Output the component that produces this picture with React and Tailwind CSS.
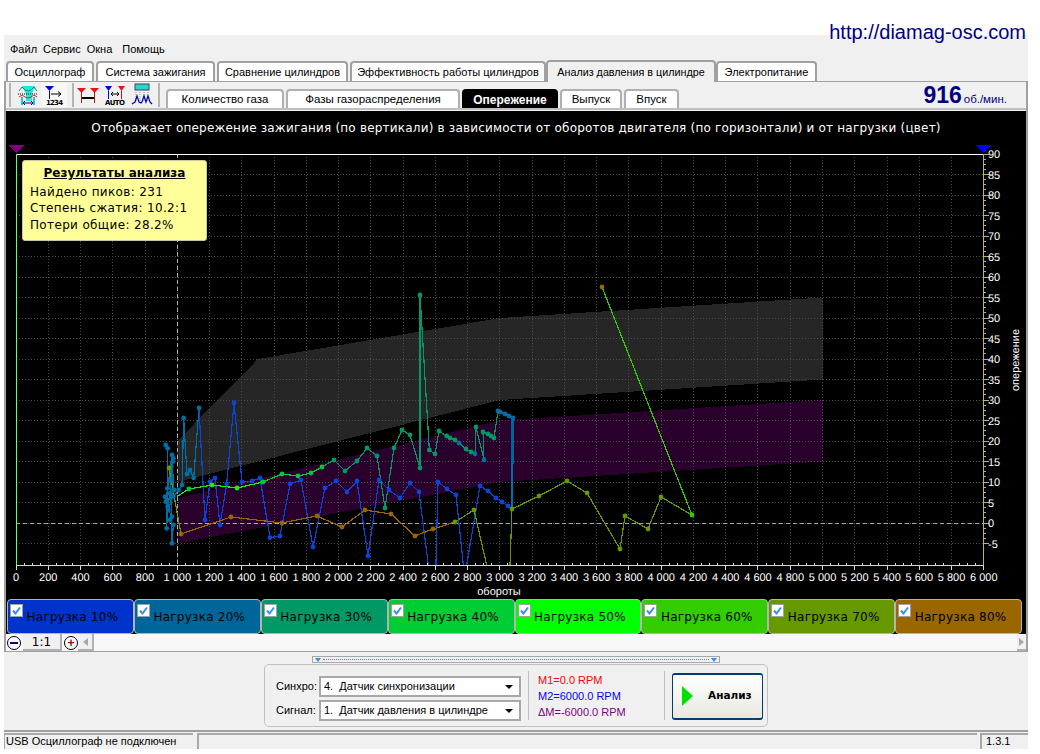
const topTabs = [
  { label: 'Осциллограф', w: 'w-[88px]' },
  { label: 'Система зажигания', w: 'w-[119px]' },
  { label: 'Сравнение цилиндров', w: 'w-[131px]' },
  { label: 'Эффективность работы цилиндров', w: 'w-[196px]' },
  { label: 'Анализ давления в цилиндре', w: 'w-[170px] h-[22px] -ml-[2px] bg-[#f0f0f0] border-b-0 -mb-[1px] z-10 text-[10.75px]', active: true },
  { label: 'Электропитание', w: 'w-[101px] -ml-[2px]' },
];

const subTabs = [
  { label: 'Количество газа', w: 'w-[118px]' },
  { label: 'Фазы газораспределения', w: 'w-[174px]' },
  { label: 'Опережение', w: 'w-[96px] bg-black text-white text-[12px] font-bold border-black', active: true },
  { label: 'Выпуск', w: 'w-[62px]' },
  { label: 'Впуск', w: 'w-[55px]' },
];

const loads = [
  { label: 'Нагрузка 10%', bg: 'bg-[#0033cc]' },
  { label: 'Нагрузка 20%', bg: 'bg-[#006699]' },
  { label: 'Нагрузка 30%', bg: 'bg-[#009966]' },
  { label: 'Нагрузка 40%', bg: 'bg-[#00cc33]' },
  { label: 'Нагрузка 50%', bg: 'bg-[#00ff00]' },
  { label: 'Нагрузка 60%', bg: 'bg-[#33cc00]' },
  { label: 'Нагрузка 70%', bg: 'bg-[#669900]' },
  { label: 'Нагрузка 80%', bg: 'bg-[#996600]' },
];

// x/y in page pixels
const rpmX = (r) => 16 + r * 0.1613;
const degY = (d) => 523 - d * 4.1;

// points read from the reference crops
const left = (pts) => pts.map(([x, y]) => [150 + x / 3, 280 + y / 3]);
const right = (pts) => pts.map(([x, y]) => [480 + x / 3, 280 + y / 3]);

const series = [
  {
    color: '#006fa6',
    pts: left([[47, 495], [53, 505], [50, 745], [53, 680], [60, 640], [45, 650], [48, 665], [66, 525], [70, 535], [62, 600], [66, 790], [70, 735], [60, 720], [66, 710], [55, 690], [72, 630], [52, 625], [64, 560], [68, 545], [70, 650], [86, 630], [96, 615], [101, 414], [111, 582], [120, 570], [131, 594], [147, 384]]),
  },
  {
    color: '#0a44d8',
    pts: left([[147, 384], [165, 720], [180, 605], [195, 594], [210, 735], [230, 612], [252, 369], [276, 606], [306, 603], [330, 594], [360, 773], [390, 768], [420, 612], [453, 600], [489, 801], [525, 624], [558, 603], [591, 636], [621, 603], [654, 828], [687, 600], [717, 630], [750, 654], [780, 609], [807, 636], [835, 855]]),
  },
  { color: '#0a44d8', pts: left([[858, 855], [864, 606], [891, 627], [918, 645], [940, 855]]) },
  { color: '#0a44d8', pts: left([[950, 855], [990, 618], [1014, 633], [1038, 654], [1056, 666], [1074, 678], [1086, 687]]) },
  {
    color: '#009966',
    pts: left([[516, 561], [552, 540], [585, 573], [621, 543], [651, 504], [681, 528], [705, 684], [732, 504], [756, 450], [780, 465], [810, 564], [810, 45], [838, 510], [855, 522], [867, 453], [890, 468], [900, 474], [915, 480], [927, 489], [948, 507], [963, 516], [975, 522], [978, 441], [1002, 540], [999, 456], [1014, 462], [1023, 468], [1032, 474], [1044, 393]]),
  },
  { color: '#006699', pts: left([[1044, 393], [1050, 396], [1065, 402], [1077, 408], [1089, 414], [1089, 550], [1086, 550], [1086, 414]]) },
  { color: '#006fa6', pts: left([[1086, 550], [1086, 687]]) },
  { color: '#00cc33', pts: left([[339, 606], [396, 582], [444, 588], [483, 579], [516, 561]]) },
  { color: '#00ff00', pts: left([[80, 650], [117, 627], [186, 615], [261, 624], [339, 606]]) },
  { color: '#996600', pts: left([[93, 762], [243, 711], [396, 729], [501, 708], [576, 741], [645, 690], [723, 702], [795, 768], [849, 747], [915, 726]]) },
  { color: '#669900', pts: left([[57, 564], [93, 762]]) },
  { color: '#669900', pts: left([[915, 726], [972, 690], [1010, 855]]) },
  { color: '#669900', pts: right([[90, 855], [96, 687], [177, 648], [261, 603], [321, 639], [420, 807], [435, 708], [504, 747], [543, 651], [636, 705]]) },
  { color: '#33cc00', pts: right([[636, 705], [366, 21]]) },
];

const dots = [
  { color: '#006fa6', pts: left([[47, 495], [53, 505], [50, 745], [53, 680], [60, 640], [45, 650], [48, 665], [66, 525], [70, 535], [62, 600], [66, 790], [70, 735], [60, 720], [66, 710], [55, 690], [72, 630], [52, 625], [64, 560], [68, 545], [70, 650], [86, 630], [96, 615], [101, 414], [111, 582], [120, 570], [131, 594], [147, 384], [1002, 540], [1044, 393], [1050, 396], [1065, 402], [1077, 408], [1089, 414], [927, 489], [975, 522]]) },
  { color: '#0a44d8', pts: left([[165, 720], [180, 605], [195, 594], [210, 735], [230, 612], [252, 369], [276, 606], [306, 603], [330, 594], [360, 773], [390, 768], [420, 612], [453, 600], [489, 801], [525, 624], [558, 603], [591, 636], [621, 603], [654, 828], [687, 600], [717, 630], [750, 654], [780, 609], [807, 636], [864, 606], [891, 627], [918, 645], [990, 618], [1014, 633], [1038, 654], [1056, 666], [1074, 678]]) },
  { color: '#009966', pts: left([[552, 540], [585, 573], [621, 543], [651, 504], [681, 528], [705, 684], [732, 504], [756, 450], [780, 465], [810, 564], [810, 45], [838, 510], [855, 522], [867, 453], [890, 468], [900, 474], [915, 480], [948, 507], [963, 516], [978, 441], [999, 456], [1014, 462], [1023, 468], [1032, 474]]) },
  { color: '#00cc33', pts: left([[339, 606], [396, 582], [444, 588], [483, 579], [516, 561], [117, 627]]) },
  { color: '#00ff00', pts: left([[186, 615], [261, 624]]) },
  { color: '#996600', pts: left([[93, 762], [243, 711], [396, 729], [501, 708], [576, 741], [645, 690], [723, 702], [795, 768], [849, 747]]) },
  { color: '#996600', pts: right([[366, 21]]) },
  { color: '#669900', pts: left([[57, 564], [915, 726], [972, 690]]) },
  { color: '#669900', pts: right([[96, 687], [177, 648], [261, 603], [321, 639], [420, 807], [435, 708], [504, 747], [543, 651]]) },
  { color: '#33cc00', pts: right([[636, 705]]) },
];

const toStr = (pts) => pts.map(([x, y]) => `${x},${y}`).join(' ');
const bandGray = [[1000, 20], [1500, 40], [3000, 50], [5000, 55], [5000, 35], [3000, 30], [1000, 10]];
const bandPurple = [[1000, 6], [3000, 25], [5000, 30], [5000, 15], [3000, 10], [1000, -5]];
const band = (b) => toStr(b.map(([r, d]) => [rpmX(r), degY(d)]));

const rpmMajor = Array.from({ length: 31 }, (_, i) => i * 200);
const rpmMinor = Array.from({ length: 121 }, (_, i) => i * 50);
const degMajor = Array.from({ length: 20 }, (_, i) => 90 - i * 5);
const degMinor = Array.from({ length: 77 }, (_, i) => 90 - i * 1.25);
const fmtRpm = (r) => (r >= 1000 ? `${Math.floor(r / 1000)} ${String(r % 1000).padStart(3, '0')}` : String(r));

function Chart() {
  return (
    <svg width="1020" height="458" viewBox="6 141 1020 458" className="block" shapeRendering="crispEdges">
      <polygon points={band(bandGray)} fill="#262626" />
      <polygon points={band(bandPurple)} fill="#2a002c" />

      {rpmMajor.map((r) => (
        <line key={r} x1={rpmX(r)} x2={rpmX(r)} y1="154" y2="565" stroke="#4c4c4c" strokeDasharray="1 2" />
      ))}
      {degMajor.map((d) => (
        <line key={d} x1="16" x2="983" y1={degY(d)} y2={degY(d)} stroke="#4c4c4c" strokeDasharray="1 2" />
      ))}

      <line x1="177" x2="177" y1="154" y2="565" stroke="#b0b0b0" strokeDasharray="4 3" />
      <line x1="16" x2="983" y1="523" y2="523" stroke="#a8a8a8" strokeDasharray="4 3" />

      <line x1="16" x2="983" y1="154.5" y2="154.5" stroke="#ffffff" />
      <line x1="16.5" x2="16.5" y1="154" y2="565" stroke="#66ff66" />
      <line x1="983.5" x2="983.5" y1="154" y2="565" stroke="#b8b860" />

      {series.map((s, i) => (
        <polyline key={i} points={toStr(s.pts)} fill="none" stroke={s.color} strokeWidth="1.2" />
      ))}
      <g shapeRendering="auto">
        {dots.map((s) =>
          s.pts.map(([x, y], i) => <circle key={s.color + x + i} cx={x} cy={y} r="2.4" fill={s.color} />)
        )}
      </g>
      <rect x="6" y="566" width="1020" height="33" fill="#000000" />

      <line x1="16" x2="983" y1="565.5" y2="565.5" stroke="#d8d8d8" />
      {rpmMinor.map((r) => (
        <line key={r} x1={rpmX(r)} x2={rpmX(r)} y1={r % 200 === 0 ? 565 : 563} y2={r % 200 === 0 ? 570 : 565} stroke="#d8d8d8" />
      ))}
      {degMinor.map((d) => (
        <line key={d} x1="984" x2={d % 5 === 0 ? 989 : 986} y1={degY(d)} y2={degY(d)} stroke="#b8b860" />
      ))}

      <polygon points="8,145 24,145 16,153" fill="#800080" />
      <polygon points="975,145 991,145 983,153" fill="#0000ff" />

      <g fill="#ffffff" fontSize="11" fontFamily="'Liberation Sans', sans-serif" textRendering="geometricPrecision">
        {rpmMajor.map((r) => (
          <text key={r} x={rpmX(r)} y="581" textAnchor="middle">{fmtRpm(r)}</text>
        ))}
        {degMajor.map((d) => (
          <text key={d} x="988" y={degY(d) + 4}>{d}</text>
        ))}
        <text x="499" y="595" textAnchor="middle" fontSize="11">обороты</text>
        <text x="0" y="0" transform="translate(1019 360) rotate(-90)" textAnchor="middle" fontSize="11">опережение</text>
      </g>
    </svg>
  );
}

function IconWaves() {
  return (
    <svg width="22" height="24" viewBox="0 0 22 24">
      <path d="M5 3h13l-3 8v7H9v-7z" fill="#22e6e6" />
      <path d="M2 8 5 4l3 3 3 1 3-1 3-3 3 4" fill="none" stroke="#00a040" />
      <path d="M1 11h20" stroke="#000" strokeDasharray="1 1" />
      <path d="M2 14l3-2 3 2 3 1 3-1 3-2 3 2" fill="none" stroke="#e02020" />
      <path d="M5 14v8M17 14v8" stroke="#22c0e6" strokeWidth="2" />
      <path d="M6 20h10M6 20l2-2M6 20l2 2M16 20l-2-2M16 20l-2 2" fill="none" stroke="#000080" />
    </svg>
  );
}

function IconNumbers() {
  return (
    <svg width="24" height="24" viewBox="0 0 24 24">
      <path d="M3 3h9L7.500 8z" fill="#0000e0" />
      <path d="M7.500 8v8" stroke="#0000e0" />
      <path d="M9 11h10M19 11l-3-2.500M19 11l-3 2.500" stroke="#000" fill="none" />
      <text x="4" y="22" fontSize="7" fontWeight="700" fontFamily="'DejaVu Sans', sans-serif" fill="#000" textLength="17">1234</text>
    </svg>
  );
}

function IconMarkers() {
  return (
    <svg width="24" height="24" viewBox="0 0 24 24">
      <path d="M1 5h9l-4.500 5zM14 5h9l-4.500 5z" fill="#ee1111" />
      <path d="M5.500 9v11M18.500 9v11" stroke="#c01010" />
      <path d="M6 15h12" stroke="#000" strokeWidth="2" />
    </svg>
  );
}

function IconAuto() {
  return (
    <svg width="24" height="24" viewBox="0 0 24 24">
      <path d="M2 3h7L5.500 8z" fill="#0000e0" />
      <path d="M15 3h7l-3.500 5z" fill="#ee1111" />
      <path d="M5.500 8v8" stroke="#0000e0" />
      <path d="M18.500 8v8" stroke="#c01010" />
      <path d="M8 11h8M8 11l2-2M8 11l2 2M16 11l-2-2M16 11l-2 2" stroke="#000" fill="none" />
      <text x="2" y="22" fontSize="7" fontWeight="700" fontFamily="'DejaVu Sans', sans-serif" fill="#000" textLength="20">AUTO</text>
    </svg>
  );
}

function IconPeaks() {
  return (
    <svg width="22" height="24" viewBox="0 0 22 24">
      <rect x="4" y="1" width="14" height="6" fill="#22d6d6" stroke="#444" />
      <path d="M5 9v10M9 9v10M13 9v10M17 9v10" stroke="#999" strokeDasharray="1 1" />
      <path d="M1 21l3-2 2-6 2 6 2 1 1-1 2-6 2 6 2-6 2 6 2 2" fill="none" stroke="#0000b0" strokeWidth="1.200" />
    </svg>
  );
}

function Sep() {
  return <div className="w-[2px] h-[24px] bg-[#b4b4b4]" />;
}

function LoadButton({ label, bg }) {
  return (
    <div className={`relative flex-1 h-[35px] rounded-[4px] border border-[#b4b4b4] flex items-center justify-center pt-[1px] pl-[4px] text-[12px] tracking-[0.25px] text-black font-['DejaVu_Sans',sans-serif] ${bg}`}>
      <span className="absolute left-[2px] top-[4px] w-[13px] h-[13px] bg-white border border-[#a0a0a0] flex items-center justify-center">
        <svg width="9" height="9" viewBox="0 0 9 9">
          <path d="M1 4.500 3.500 7.500 8 1.500" fill="none" stroke="#3a8ef0" strokeWidth="2" />
        </svg>
      </span>
      {label}
    </div>
  );
}

function Select({ text }) {
  return (
    <div className="w-[202px] h-[21px] bg-white border-2 border-[#a8a8a8] flex items-center justify-between pl-[3px] pr-[6px] text-[11px] text-black">
      <span className="whitespace-pre">{text}</span>
      <span className="w-0 h-0 border-x-[4px] border-x-transparent border-t-[4px] border-t-black" />
    </div>
  );
}

export default function App() {
  return (
    <div className="w-[1040px] h-[754px] bg-white font-['Liberation_Sans',sans-serif] text-[11px] text-black overflow-hidden">
      <div className="relative z-20 h-[35px] flex justify-end pr-[14px] pt-[20px]">
        <span className="h-[24px] text-[20px] leading-[24px] text-[#000080]">http://diamag-osc.com</span>
      </div>

      <div className="ml-[4px] w-[1024px] h-[714px] bg-[#f0f0f0] flex flex-col">
        <div className="h-[24px] flex items-center gap-[6px] pl-[6px] pt-[4px] shrink-0">
          <span>Файл</span>
          <span>Сервис</span>
          <span>Окна</span>
          <span className="ml-[4px]">Помощь</span>
        </div>

        <div className="relative h-[22px] flex items-end gap-[2px] pl-[2px] shrink-0">
          {topTabs.map((t) => (
            <div
              key={t.label}
              className={`relative h-[20px] flex items-center justify-center rounded-t-[4px] border-2 border-b-0 border-[#a0a0a0] whitespace-nowrap ${t.active ? '' : 'bg-white'} ${t.w}`}
            >
              {t.label}
            </div>
          ))}
        </div>

        <div className="h-[571px] border-2 border-t border-b border-[#a0a0a0] flex flex-col shrink-0">
          <div className="h-[28px] flex items-end shrink-0 border-b-2 border-[#c0c0c0]">
            <div className="h-[26px] flex items-center pl-[3px]">
              <Sep />
              <div className="ml-[6px] flex items-center gap-[2px]">
                <span className="w-[22px] flex justify-center"><IconWaves /></span>
                <span className="w-[26px] flex justify-center bg-[#f8f8f8]"><IconNumbers /></span>
              </div>
              <div className="ml-[5px]"><Sep /></div>
              <div className="ml-[1px] flex items-center gap-[2px]">
                <span className="w-[25px] flex justify-center"><IconMarkers /></span>
                <span className="w-[25px] flex justify-center"><IconAuto /></span>
                <span className="w-[26px] flex justify-center"><IconPeaks /></span>
              </div>
              <div className="ml-[3px]"><Sep /></div>
            </div>

            <div className="ml-[6px] h-[20px] flex items-end gap-[2px] text-[11.5px]">
              {subTabs.map((t) => (
                <div
                  key={t.label}
                  className={`h-[19px] flex items-center justify-center rounded-t-[4px] border-2 border-b-0 whitespace-nowrap ${t.active ? '' : 'bg-white border-[#b0b0b0]'} ${t.w}`}
                >
                  {t.label}
                </div>
              ))}
            </div>

            <div className="ml-auto mr-[19px] -mb-[1px] flex items-baseline gap-[2px] text-[#000080]">
              <span className="text-[23px] leading-[27px] font-bold">916</span>
              <span className="text-[11.5px]">об./мин.</span>
            </div>
          </div>

          <div className="relative mt-[1px] bg-black shrink-0">
            <div className="h-[30px] pt-[8px] text-center text-[12px] tracking-[0.2px] leading-[18px] text-white font-['DejaVu_Sans',sans-serif]">
              Отображает опережение зажигания (по вертикали) в зависимости от оборотов двигателя (по горизонтали) и от нагрузки (цвет)
            </div>
            <Chart />
            <div className="flex pl-[1px] pr-[4px]">
              {loads.map((l) => (
                <LoadButton key={l.label} label={l.label} bg={l.bg} />
              ))}
            </div>

            <div className="absolute left-[16px] top-[49px] w-[185px] h-[81px] bg-[#ffff99] border border-[#c8c8a0] rounded-[3px] pt-[4px] pl-[7px] text-[12px] tracking-[0.35px] leading-[16.5px] font-['DejaVu_Sans',sans-serif]">
              <div className="text-center font-bold underline tracking-normal mb-[2px] pr-[7px]">Результаты анализа</div>
              <div>Найдено пиков: 231</div>
              <div>Степень сжатия: 10.2:1</div>
              <div>Потери общие: 28.2%</div>
            </div>
          </div>

          <div className="h-[17px] flex items-center bg-[#f8f8f8] pl-[1px] shrink-0">
            <span className="w-[14px] h-[14px] rounded-full border border-black bg-white flex items-center justify-center">
              <span className="w-[8px] h-[2px] bg-[#000080]" />
            </span>
            <span className="ml-[2px] w-[39px] h-[17px] bg-[#f0f0f0] border-b-2 border-r-2 border-[#b0b0b0] flex items-center justify-center text-[12px] font-['DejaVu_Sans',sans-serif]">1:1</span>
            <span className="ml-[2px] w-[14px] h-[14px] rounded-full border border-black bg-white flex items-center justify-center text-[12px] leading-none font-bold text-[#a00000]">+</span>
            <span className="w-[16px] h-[17px] bg-[#f0f0f0] border-b-2 border-r-2 border-[#b0b0b0] flex items-center justify-center">
              <span className="w-0 h-0 border-y-[4px] border-y-transparent border-r-[5px] border-r-[#a8a8a8]" />
            </span>
            <span className="ml-auto w-[9px] h-[17px] bg-[#f0f0f0] border-b-2 border-[#b0b0b0] flex items-center justify-center">
              <span className="w-0 h-0 border-y-[4px] border-y-transparent border-l-[5px] border-l-[#a8a8a8]" />
            </span>
          </div>
        </div>

        <div className="h-[78px] flex flex-col items-center pt-[4px] shrink-0">
          <div className="w-[408px] h-[7px] border border-[#a8a8a8] flex items-center justify-between px-[2px]">
            <span className="w-0 h-0 border-x-[3px] border-x-transparent border-t-[4px] border-t-[#3a8ef0]" />
            <span className="flex-1 mx-[2px] border-t border-dotted border-[#3a8ef0]" />
            <span className="w-0 h-0 border-x-[3px] border-x-transparent border-t-[4px] border-t-[#3a8ef0]" />
          </div>

          <div className="mt-[1px] w-[504px] h-[63px] border border-[#c0c0c0] rounded-[5px] flex items-center pl-[11px]">
            <div className="mt-[6px] flex flex-col gap-[3px]">
              <div className="flex items-center">
                <span className="w-[43px]">Синхро:</span>
                <Select text="4.  Датчик синхронизации" />
              </div>
              <div className="flex items-center">
                <span className="w-[43px]">Сигнал:</span>
                <Select text="1.  Датчик давления в цилиндре" />
              </div>
            </div>
            <div className="ml-[7px] w-px h-[49px] bg-[#c0c0c0]" />
            <div className="ml-[9px] w-[126px] flex flex-col leading-[16px]">
              <span className="text-[#ff0000]">M1=0.0 RPM</span>
              <span className="text-[#0000ff]">M2=6000.0 RPM</span>
              <span className="text-[#800080]">ΔM=-6000.0 RPM</span>
            </div>
            <div className="w-px h-[49px] bg-[#c0c0c0]" />
            <div className="ml-[7px] mt-[1px] w-[91px] h-[47px] border-y-2 border-x border-[#003c74] rounded-[3px] bg-gradient-to-b from-white to-[#e8e8e0] flex items-center pl-[9px]">
              <span className="w-0 h-0 border-y-[10px] border-y-transparent border-l-[11px] border-l-[#00e000]" />
              <span className="ml-[15px] font-bold text-[10.5px] font-['DejaVu_Sans',sans-serif]">Анализ</span>
            </div>
          </div>
        </div>

        <div className="h-[19px] border-t-2 border-[#a0a0a0] pt-[1px] flex shrink-0">
          <div className="w-[189px] border-t-2 border-l border-[#a8a8a8] pl-[1px] leading-[13px]">USB Осциллограф не подключен</div>
          <div className="ml-[4px] w-[780px] border-t-2 border-l-2 border-[#a8a8a8]" />
          <div className="ml-[3px] flex-1 border-t-2 border-l-2 border-[#a8a8a8] pl-[4px] leading-[13px]">1.3.1</div>
        </div>
      </div>
    </div>
  );
}
